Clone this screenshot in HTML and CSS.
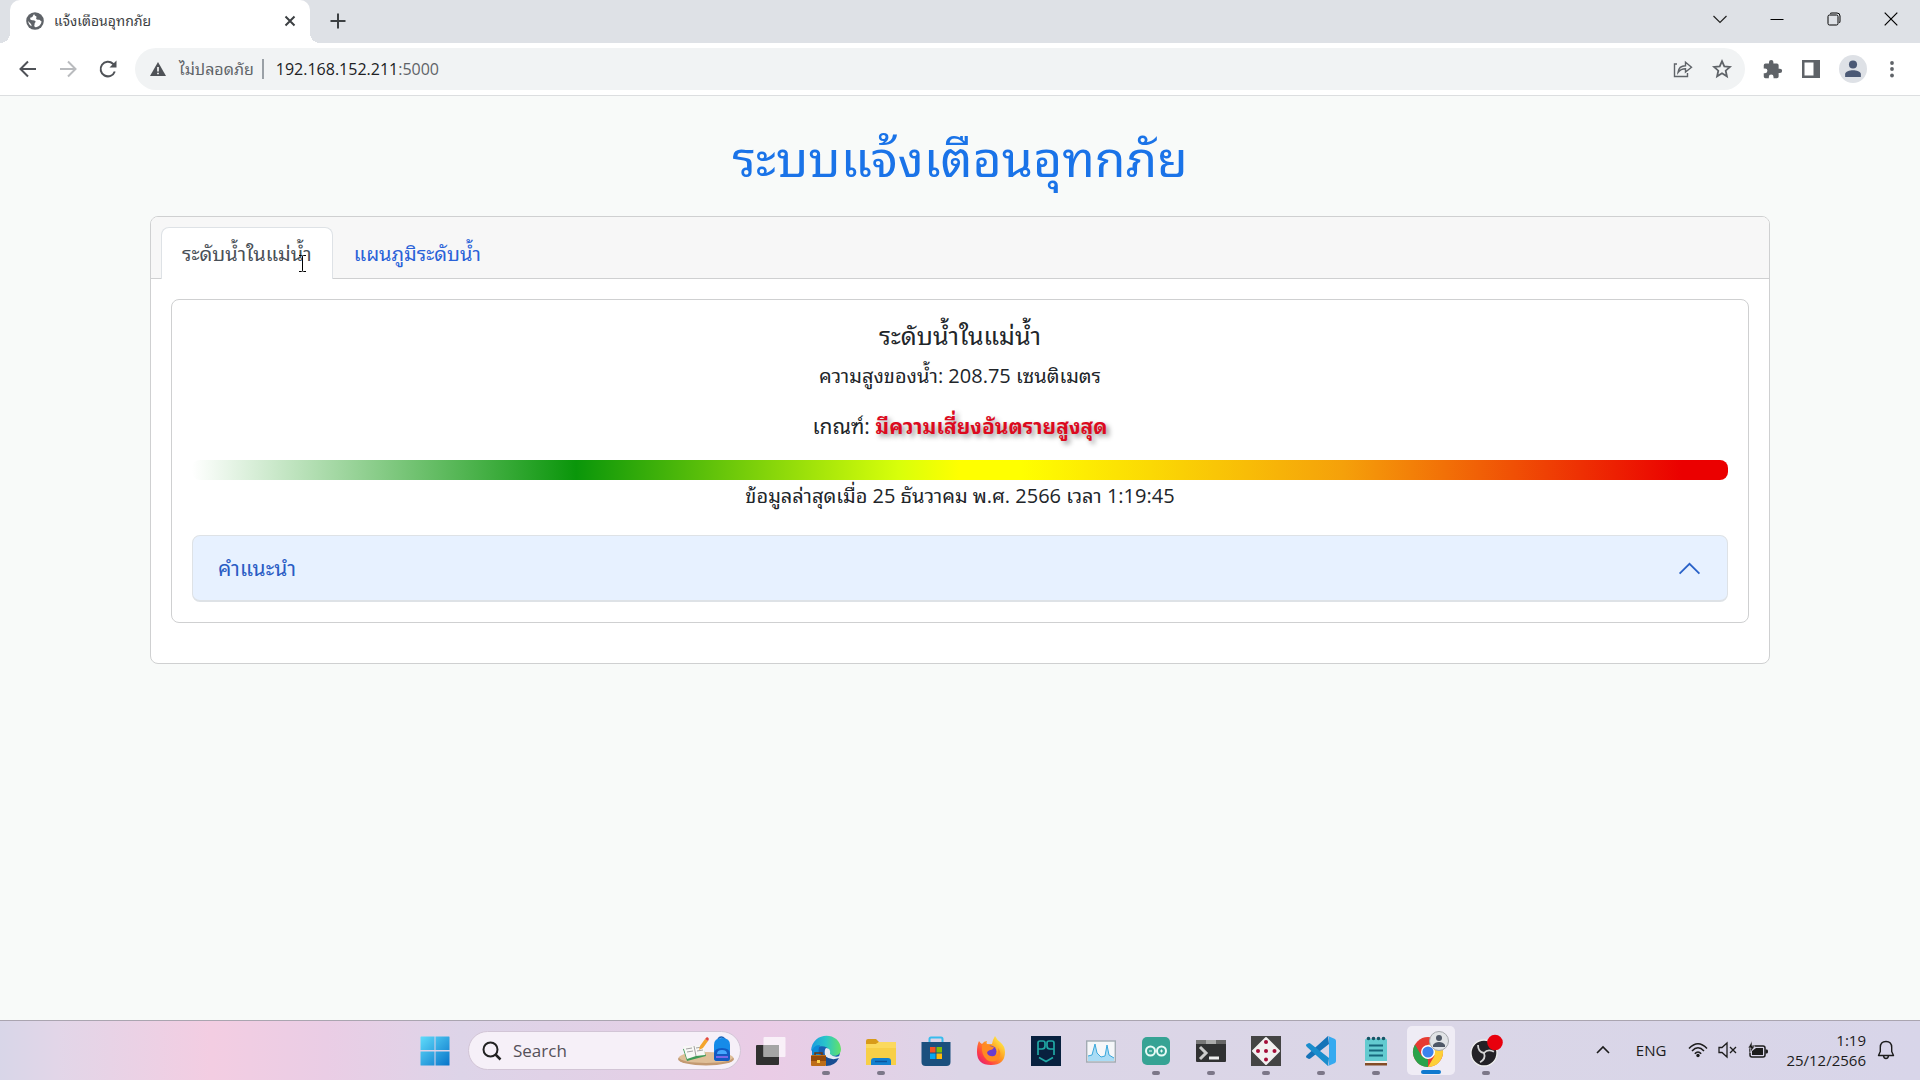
FILE: index.html
```html
<!DOCTYPE html>
<html lang="th">
<head>
<meta charset="utf-8">
<meta name="viewport" content="width=device-width, initial-scale=1">
<title>แจ้งเตือนอุทกภัย</title>
<link rel="stylesheet" href="styles.css">
</head>
<body>
<div class="screen">
  <header class="browser">
    <div class="tabstrip">
      <div class="browser-tab">
        <svg class="globe" viewBox="0 0 18 18" width="18" height="18"><circle cx="9" cy="9" r="8.8" fill="#5f6368"/><path d="M8 2.200c-1 .9-.8 1.800-1.600 2.600-.8.800-1.800.4-2.200 1.400C3.900 7.400 5 8 6.200 8.200c1.200.2 2.800-.1 3.300 1 .5 1.200-1 1.300-.9 2.500.1.900-.6 1.700-.2 2.600.2.600.8.900 1.400.9 3.200-.4 5.600-3 5.700-6-1.100-.1-1.300-1-2.300-1.400-1-.3-1.900.2-2.700-.5-.9-.8.300-1.700-.1-2.800-.3-.7-1.300-.5-1.600-1.100-.2-.4-.2-.8-.8-1.200zM2.200 8.700c0 2.200 1.300 4.500 3.300 5.500.2-.9-.2-1.700-.7-2.400-.6-.8-1.900-1.800-2.600-3.100z" fill="#fff"/></svg>
        <span class="browser-tab-title">แจ้งเตือนอุทกภัย</span>
        <button class="plain" aria-label="Close tab"><svg viewBox="0 0 12 12" width="12" height="12"><path d="M1.500 1.500l9 9M10.500 1.500l-9 9" stroke="#3c4043" stroke-width="2"/></svg></button>
      </div>
      <button class="plain new-tab" aria-label="New tab"><svg viewBox="0 0 16 16" width="16" height="16"><path d="M8 .5v15M.5 8h15" stroke="#3c4043" stroke-width="2"/></svg></button>
      <div class="window-controls">
        <button class="plain" aria-label="Search tabs"><svg viewBox="0 0 14 14" width="14" height="14"><path d="M.5 4L7 10.500 13.500 4" fill="none" stroke="#222" stroke-width="1.200"/></svg></button>
        <button class="plain" aria-label="Minimize"><svg viewBox="0 0 14 14" width="14" height="14"><path d="M.5 7.500h13" stroke="#000"/></svg></button>
        <button class="plain" aria-label="Restore"><svg viewBox="0 0 14 14" width="14" height="14"><g fill="none" stroke="#000"><rect x="1" y="3" width="10" height="10" rx="1.500"/><path d="M3 1.800Q3.500 1 5 1h5q3 0 3 3v5q0 1.500-.8 2"/></g></svg></button>
        <button class="plain" aria-label="Close window"><svg viewBox="0 0 14 14" width="14" height="14"><path d="M.7.7l12.600 12.600M13.300.7L.7 13.300" stroke="#000" stroke-width="1.200"/></svg></button>
      </div>
    </div>
    <nav class="toolbar">
      <div class="nav-buttons">
        <button class="plain" aria-label="Back"><svg viewBox="0 0 20 20" width="20" height="20"><path d="M18 10H3M10 2.500L2.500 10l7.500 7.500" fill="none" stroke="#4f5257" stroke-width="2"/></svg></button>
        <button class="plain" aria-label="Forward"><svg viewBox="0 0 20 20" width="20" height="20"><path d="M2 10h15M10 2.500l7.500 7.500-7.500 7.500" fill="none" stroke="#b9bbbe" stroke-width="2"/></svg></button>
        <button class="plain" aria-label="Reload"><svg viewBox="0 0 20 20" width="20" height="20"><path d="M16.800 12.500A7.300 7.300 0 1 1 15 4.800L17 7" fill="none" stroke="#4f5257" stroke-width="2"/><path d="M18.500 1.500v7h-7z" fill="#4f5257"/></svg></button>
      </div>
      <div class="address">
        <svg viewBox="0 0 16 14" width="16" height="14"><path d="M8 0l8 14H0z" fill="#4f5257"/><path d="M7.200 5h1.600v4.500H7.200zM7.200 10.700h1.600v1.500H7.200z" fill="#fff"/></svg>
        <span class="insecure">ไม่ปลอดภัย</span>
        <span class="address-rule"></span>
        <span class="url">192.168.152.211<span class="port">:5000</span></span>
        <button class="plain share" aria-label="Share"><svg viewBox="0 0 20 20" width="20" height="20"><g fill="none" stroke="#5f6368" stroke-width="1.400"><path d="M4 5H1.500v12.500h13V14"/><path d="M5 13.500c.5-4.500 3-6.800 7.500-6.800V3.200l6 5-6 4.800V9.800c-3.500 0-5.500 1-7.500 3.700z"/></g></svg></button>
        <button class="plain" aria-label="Bookmark"><svg viewBox="0 0 20 20" width="20" height="20"><path d="M10 2.200l2.300 5.200 5.600.5-4.200 3.800 1.200 5.600L10 14.300l-4.900 3 1.200-5.600L2.100 7.900l5.600-.5z" fill="none" stroke="#5f6368" stroke-width="1.800"/></svg></button>
      </div>
      <div class="tools">
        <button class="plain" aria-label="Extensions"><svg viewBox="0 0 24 24" width="21" height="21"><path d="M20.500 11H19V7a2 2 0 0 0-2-2h-4V3.500a2.500 2.500 0 0 0-5 0V5H4a2 2 0 0 0-2 2v3.800h1.500a2.700 2.700 0 0 1 0 5.400H2V20a2 2 0 0 0 2 2h3.800v-1.500a2.700 2.700 0 0 1 5.400 0V22H17a2 2 0 0 0 2-2v-4h1.500a2.500 2.500 0 0 0 0-5z" fill="#5f6368"/></svg></button>
        <button class="plain" aria-label="Side panel"><svg viewBox="0 0 18 18" width="18" height="18"><path d="M0 0h18v18H0zM2.500 2.500v13h9v-13z" fill="#5f6368" fill-rule="evenodd"/></svg></button>
        <button class="plain avatar" aria-label="Profile"><svg viewBox="0 0 16 16" width="18" height="18"><circle cx="8" cy="4" r="3.600" fill="#4b5975"/><path d="M1 15v-2.500C1 10 5 9 8 9s7 1 7 3.500V15z" fill="#4b5975"/></svg></button>
        <button class="plain menu" aria-label="Menu"><svg viewBox="0 0 4 18" width="4" height="18"><g fill="#5f6368"><circle cx="2" cy="3" r="1.900"/><circle cx="2" cy="9" r="1.900"/><circle cx="2" cy="15.500" r="1.900"/></g></svg></button>
      </div>
    </nav>
  </header>

  <main class="page">
    <h1 class="page-title">ระบบแจ้งเตือนอุทกภัย</h1>
    <section class="card">
      <nav class="card-header">
        <a class="nav-link active" href="#level">ระดับน้ำในแม่น้ำ<svg class="pointer" viewBox="0 0 9 17" width="9" height="17"><path d="M1 .5h2.500q1 0 1 1 0-1 1-1H8M4.500 1.500v14M1 16.500h2.500q1 0 1-1 0 1 1 1H8" fill="none" stroke="#000"/></svg></a>
        <a class="nav-link" href="#chart">แผนภูมิระดับน้ำ</a>
      </nav>
      <div class="card-body">
        <article class="card level" id="level">
          <h2 class="level-title">ระดับน้ำในแม่น้ำ</h2>
          <p class="level-line">ความสูงของน้ำ: 208.75 เซนติเมตร</p>
          <p class="level-line rating">เกณฑ์: <strong class="danger">มีความเสี่ยงอันตรายสูงสุด</strong></p>
          <div class="scale"></div>
          <p class="updated">ข้อมูลล่าสุดเมื่อ 25 ธันวาคม พ.ศ. 2566 เวลา 1:19:45</p>
          <button class="accordion" aria-expanded="true">คำแนะนำ<svg viewBox="0 0 24 24" width="25" height="25"><path d="M2.500 17L12 7.500l9.500 9.500" fill="none" stroke="#2a62c8" stroke-width="1.700"/></svg></button>
        </article>
      </div>
    </section>
  </main>

  <footer class="taskbar">
    <div class="apps">
      <button class="plain app" aria-label="Start"><svg viewBox="0 0 30 30" width="30" height="30"><defs><linearGradient id="win" x1="0" y1="0" x2="1" y2="1" gradientUnits="objectBoundingBox"><stop offset="0" stop-color="#5fdcfb"/><stop offset="1" stop-color="#0874c9"/></linearGradient></defs><path d="M1 .5h13.500V14H.5V1zM15.500.5H29q.5 0 .5.500v13h-14zM.5 15.500h14v14H1q-.5 0-.5-.5zM15.500 15.500h14V29q0 .5-.5.500H15.500z" fill="url(#win)"/></svg></button>
      <label class="search">
        <svg viewBox="0 0 20 20" width="20" height="20"><circle cx="8.500" cy="8.500" r="7" fill="none" stroke="#222" stroke-width="2"/><path d="M13.500 13.500l5 5" stroke="#222" stroke-width="2.500"/></svg>
        <input class="search-input" type="text" placeholder="Search" aria-label="Search">
        <svg viewBox="0 0 57 32" width="57" height="32"><ellipse cx="28" cy="24" rx="28" ry="6.500" fill="#c39a72"/><ellipse cx="28" cy="22.500" rx="27" ry="5.500" fill="#dfbf98"/><path d="M5 14l4 12 19-5-4-11z" fill="#3f9a57"/><path d="M5 11l11 0 10-2 1 11-9 1-9 3z" fill="#f8f8f6"/><path d="M16 11l2 10M8 14l6-1M9 17l6-1M18 13l6-1M19 16l6-1" stroke="#8c8c8c" stroke-width=".8"/><path d="M21 15l1-4 5-7 3 2-5 7z" fill="#f4a52c"/><path d="M27 4l2-2q3 1 1 4z" fill="#e2473f"/><path d="M40 4q3-4 7 0" fill="none" stroke="#1761b8" stroke-width="1.500"/><path d="M36 10q0-7 8-7t8 7v13q0 3-3 3H39q-3 0-3-3z" fill="#168be8"/><path d="M36 19q0-6 8-6t8 6v4q0 3-3 3H39q-3 0-3-3z" fill="#125ac3"/><path d="M39 19q0-4 5-4t5 4z" fill="#45a7ff"/><path d="M38 21h12v2H38z" fill="#7968e8"/></svg>
      </label>
      <button class="plain app" aria-label="Task view"><svg viewBox="0 0 30 30" width="30" height="30"><rect y="9" width="23" height="20" rx="1" fill="#303030"/><rect x="7.500" y="1" width="22" height="20" rx="1" fill="#fff" opacity=".7"/><path d="M7.500 9H23v12H7.500z" fill="#a5a5a5"/></svg></button>
      <button class="plain app running" aria-label="Edge"><svg viewBox="0 0 30 30" width="30" height="30"><defs><linearGradient id="edge" x1="0" x2="1"><stop offset="0" stop-color="#1b9be0"/><stop offset=".5" stop-color="#2ac6c9"/><stop offset="1" stop-color="#63e267"/></linearGradient></defs><circle cx="15" cy="15" r="14" fill="#1a60b2"/><path d="M0 15C1-5 29-5 30 13c0 6-5 8-11 6-2-1 0-2-1-5-2-5-12-5-18 1z" fill="url(#edge)"/><path d="M1 18Q1 9 9 9c-3 6-1 10 4 15H2z" fill="#0c8cd8"/><path d="M15 12q5 0 4 6 4 4 10 2-1 3-3 5-10 0-12-6-1-5 1-7z" fill="#e7eaf4"/><path d="M14 20q6 5 14 2-4 8-13 8z" fill="#174d92"/><rect y="19" width="15" height="11" rx="1" fill="#bd6d18"/><path d="M4 19v-2h7v2" fill="none" stroke="#6c350e" stroke-width="1.500"/><path d="M0 20h15v5H0z" fill="#91490c"/><path d="M6 24h3v3H6z" fill="#ffd34d"/></svg></button>
      <button class="plain app running" aria-label="File Explorer"><svg viewBox="0 0 30 30" width="30" height="30"><path d="M0 5q0-2 2-2h8l3 3v5H0z" fill="#d89b19"/><path d="M0 8h10l3-2h17v23H0z" fill="#f7cf47"/><path d="M0 8h10l3-2h17v6H0z" fill="#fbd95d"/><path d="M5 29v-4q0-3 3-3h14q3 0 3 3v4z" fill="#1380cf"/><path d="M9 25.500h12" stroke="#0b559d" stroke-width="1.500"/></svg></button>
      <button class="plain app" aria-label="Microsoft Store"><svg viewBox="0 0 30 30" width="30" height="30"><path d="M8.500 7V3q0-1.500 1.500-1.500h10q1.500 0 1.500 1.500v4" fill="none" stroke="#38bced" stroke-width="2"/><path d="M.5 6h29v20q0 4-4 4h-21q-4 0-4-4z" fill="#1b507e"/><path d="M9 11h5.500v5.500H9z" fill="#f35325"/><path d="M15.500 11H21v5.500h-5.500z" fill="#81bc06"/><path d="M9 17.500h5.500V23H9z" fill="#05a6f0"/><path d="M15.500 17.500H21V23h-5.500z" fill="#ffba08"/></svg></button>
      <button class="plain app" aria-label="Firefox"><svg viewBox="0 0 30 30" width="30" height="30"><defs><linearGradient id="fox" x1="1" y1="0" x2="0" y2="1"><stop offset=".1" stop-color="#fff34a"/><stop offset=".45" stop-color="#ff9a21"/><stop offset=".75" stop-color="#ff3d45"/><stop offset="1" stop-color="#d4128c"/></linearGradient></defs><path d="M3 5q1 2 3 3 2-3 5-3-1 2 0 3l5 0q1-5 3-8 2 4 5 6 5 4 5 10 0 13-14 13T1 16Q1 9 3 5z" fill="url(#fox)"/><circle cx="14.500" cy="15.500" r="6" fill="#6a3bd0"/><path d="M6 9q6-2 8 1l4 1q-1 3-4 3-3 1-3 3 2 4 7 3 5-1 4-8 4 5 1 10-5 6-12 2-6-5-5-15z" fill="#ff8a22"/></svg></button>
      <button class="plain app" aria-label="Game launcher"><svg viewBox="0 0 30 30" width="30" height="30"><path d="M0 0h30v30H0z" fill="#08213f"/><path d="M7 19V7q0-2 2-2h3q2 0 2 2v3q0 3-3 3H7M23 19V7q0-2-2-2h-3q-2 0-2 2v3q0 3 3 3h4M8 21.500l7 4 7-4" fill="none" stroke="#20a8a5" stroke-width="1.700"/></svg></button>
      <button class="plain app" aria-label="Monitor"><svg viewBox="0 0 30 30" width="30" height="30"><rect x=".7" y="5" width="28.600" height="21" fill="#f5f7f9" stroke="#a2abb3" stroke-width="1.400"/><path d="M2 20l4-1 3-11 2 9 4 4 4-1 2-11 2 10 5 3v3H2z" fill="#aadcf5"/><path d="M2 20l4-1 3-11 2 9 4 4 4-1 2-11 2 10 5 3" fill="none" stroke="#3ba8dc"/></svg></button>
      <button class="plain app running" aria-label="Arduino"><svg viewBox="0 0 30 30" width="30" height="30"><rect x="1" y="1" width="28" height="28" rx="5" fill="#36a394"/><g fill="none" stroke="#e8fbf6" stroke-width="2"><circle cx="9.500" cy="15" r="4.500"/><circle cx="20.500" cy="15" r="4.500"/><path d="M8 15h3M19 15h3M20.500 13.500v3" stroke-width="1"/></g></svg></button>
      <button class="plain app running" aria-label="Terminal"><svg viewBox="0 0 30 30" width="30" height="30"><rect y="4" width="30" height="22" rx="1" fill="#303132"/><path d="M0 4h10v4H0z" fill="#777"/><path d="M10 4h10v4H10z" fill="#aaa"/><path d="M20 4h10v4H20z" fill="#666"/><path d="M4 11l6 6-6 6" fill="none" stroke="#ccc" stroke-width="3"/><path d="M13 22h10" stroke="#eee" stroke-width="3"/></svg></button>
      <button class="plain app running" aria-label="Dice"><svg viewBox="0 0 30 30" width="30" height="30"><path d="M0 0h30v30H0z" fill="#444"/><path d="M15 2l13 13-13 13L2 15z" fill="#f2f0f0" stroke="#f2f0f0" stroke-width="2" stroke-linejoin="round"/><g fill="#a50d38"><circle cx="15" cy="6" r="2"/><circle cx="7" cy="15" r="2"/><circle cx="15" cy="15" r="2"/><circle cx="23.500" cy="15" r="2"/><circle cx="15" cy="23.500" r="2"/></g></svg></button>
      <button class="plain app running" aria-label="VS Code"><svg viewBox="0 0 30 30" width="30" height="30"><path d="M22 0L1 19q-2 2 0 3l2 1q1 0 2-1L23 8z" fill="#1673b8"/><path d="M22 30L1 11q-2-2 0-3l2-1q1 0 2 1l18 14z" fill="#1a8dcd"/><path d="M22 0l7 3q1 1 1 2v20q0 1-1 2l-7 3q1-1 1-3V3q0-2-1-3z" fill="#36aaf0"/></svg></button>
      <button class="plain app running" aria-label="Notepad"><svg viewBox="0 0 30 30" width="30" height="30"><rect x="4" y="3" width="22" height="26" rx="1" fill="#63cbd0"/><path d="M4 27h22v2.500H4z" fill="#834c26"/><path d="M4 25h22v2H4z" fill="#f1efea"/><g fill="#155566"><circle cx="7.500" cy="2.500" r="1.800"/><circle cx="12.500" cy="2.500" r="1.800"/><circle cx="17.500" cy="2.500" r="1.800"/><circle cx="22.500" cy="2.500" r="1.800"/></g><path d="M8 9.500h14M8 14.500h14M8 19.500h14" stroke="#17677c" stroke-width="2"/></svg></button>
      <button class="plain app running current" aria-label="Chrome"><svg viewBox="0 0 36 32" width="36" height="32"><circle cx="15" cy="17" r="15" fill="#e63b32"/><path d="M2 9.500l6.500 11.200L15 24.500 15 32A15 15 0 0 1 2 9.500z" fill="#29a34b"/><path d="M28 9.500A15 15 0 0 1 15 32l6.500-11.300L15 9.500z" fill="#fdcf37"/><circle cx="15" cy="17" r="7" fill="#fff"/><circle cx="15" cy="17" r="5.600" fill="#3b82ed"/><circle cx="26" cy="6" r="9.500" fill="#e1e3e6" stroke="#a5a8ad"/><circle cx="26" cy="3" r="3" fill="#4e5766"/><path d="M20 12V10q2-3 6-3t6 3v2z" fill="#4e5766"/></svg></button>
      <button class="plain app running" aria-label="OBS Studio"><svg viewBox="0 0 36 32" width="36" height="32"><circle cx="16" cy="18" r="13" fill="#232226" stroke="#eee" stroke-width="1.300"/><g fill="none" stroke="#d5d5d5" stroke-width="1.800"><path d="M16 18q-6-1-6-8"/><path d="M16 18q-6-1-6-8" transform="rotate(120 16 18)"/><path d="M16 18q-6-1-6-8" transform="rotate(240 16 18)"/></g><circle cx="27" cy="7.500" r="7.800" fill="#e8000d"/></svg></button>
    </div>
    <div class="tray">
      <button class="plain" aria-label="Hidden icons"><svg viewBox="0 0 14 8" width="14" height="8"><path d="M1 7l6-6 6 6" fill="none" stroke="#1c1c1c" stroke-width="1.600"/></svg></button>
      <span class="lang">ENG</span>
      <div class="status">
        <svg viewBox="0 0 20 16" width="20" height="16"><g fill="none" stroke="#1c1c1c" stroke-width="1.500"><path d="M1 6.500q9-9.500 18 0M4 9q6-6.500 12 0M6.800 11.800q3.200-3.600 6.400 0"/></g><circle cx="10" cy="13.500" r="1.700" fill="#1c1c1c"/></svg>
        <svg viewBox="0 0 20 16" width="20" height="16"><path d="M1 5.500h3L9 1v14l-5-4.500H1zM12 5l6 6M18 5l-6 6" fill="none" stroke="#1c1c1c" stroke-width="1.300"/></svg>
        <svg viewBox="0 0 20 16" width="20" height="16"><rect x="2" y="4" width="15" height="11" rx="2" fill="none" stroke="#1c1c1c" stroke-width="1.500"/><path d="M4 9l4-3h7v7H4zM17.500 7.500H19q1 0 1 2t-1 2h-1.500z" fill="#1c1c1c"/><path d="M4-1L0 6h3L2 11l5-7H4z" fill="#1c1c1c" stroke="#dad7e8" stroke-width=".6"/></svg>
      </div>
      <div class="clock"><span>1:19</span><span>25/12/2566</span></div>
      <button class="plain" aria-label="Notifications"><svg viewBox="0 0 18 20" width="18" height="20"><path d="M1.500 15.500l1.800-4V7.500q0-6 5.700-6t5.700 6v4l1.800 4zM6.500 16q.5 2.500 2.500 2.500t2.500-2.500" fill="none" stroke="#1c1c1c" stroke-width="1.400" stroke-linejoin="round"/></svg></button>
    </div>
  </footer>
</div>
</body>
</html>
```
FILE: styles.css
```css
*, *::before, *::after { box-sizing: border-box; }

body {
  margin: 0;
  font-family: "Open Sans", "Noto Sans", "Noto Sans Thai Looped", "Noto Looped Thai", "Loma", "Noto Sans Thai", sans-serif;
  font-size: 20px;
  line-height: 30px;
  color: #212529;
}

h1, h2, p { margin: 0; font-weight: 400; }
svg { display: block; flex: none; overflow: visible; }

.screen { display: flex; flex-direction: column; min-height: 100vh; }

.plain {
  display: flex;
  align-items: center;
  justify-content: center;
  flex: none;
  padding: 0;
  border: 0;
  background: none;
}

/* browser window */
.tabstrip { display: flex; height: 43px; background: #dee1e6; }

.browser-tab {
  display: flex;
  align-items: center;
  width: 300px;
  margin-left: 10px;
  padding: 0 14px 2px 16px;
  gap: 10px;
  position: relative;
  border-radius: 10px 10px 0 0;
  background: #fff;
  font-size: 14px;
  color: #3c4043;
}
.browser-tab::before,
.browser-tab::after {
  content: "";
  position: absolute;
  bottom: 0;
  width: 10px;
  height: 10px;
}
.browser-tab::before { right: 100%; background: radial-gradient(circle at 0 0, #dee1e6 10px, #fff 10px); }
.browser-tab::after { left: 100%; background: radial-gradient(circle at 100% 0, #dee1e6 10px, #fff 10px); }
.browser-tab-title { flex: 1; white-space: nowrap; }
.new-tab { width: 55px; padding-bottom: 1px; }

.window-controls { display: flex; margin-left: auto; height: 37px; padding-right: 1px; }
.window-controls .plain { width: 57px; }

.toolbar {
  display: flex;
  align-items: center;
  height: 53px;
  padding: 0 22px 0 18px;
  border-bottom: 1px solid #dcdee0;
  background: #fff;
}
.nav-buttons { display: flex; gap: 20px; width: 117px; }

.address {
  display: flex;
  align-items: center;
  flex: 1;
  height: 42px;
  padding: 0 13px 0 15px;
  border-radius: 21px;
  background: #f1f3f4;
  font-size: 16px;
  color: #202124;
}
.insecure { margin-left: 13px; color: #5f6368; }
.address-rule { width: 2px; height: 20px; margin: 0 12px 0 8px; background: #9aa0a6; }
.port { color: #5f6368; }
.share { margin: 0 19px 0 auto; }

.tools { display: flex; align-items: center; gap: 19px; margin-left: 17px; }
.avatar { width: 28px; height: 28px; border-radius: 50%; background: #dee1e6; }
.menu { width: 12px; }

/* page */
.page {
  flex: 1;
  padding: 30px 150px;
  background: #f8faf9;
}
.page-title {
  margin-bottom: 26px;
  font-size: 50px;
  line-height: 64px;
  text-align: center;
  color: #1a73e8;
}
.card {
  border: 1px solid #cfd0d1;
  border-radius: 8px;
  background: #fff;
}
.card-header {
  display: flex;
  padding: 10px 10px 0;
  border-bottom: 1px solid #cfd0d1;
  border-radius: 7px 7px 0 0;
  background: #f7f7f7;
}
.nav-link {
  position: relative;
  margin-bottom: -1px;
  padding: 11px 20px 10px;
  border: 1px solid transparent;
  border-bottom: 0;
  border-radius: 8px 8px 0 0;
  text-decoration: none;
  color: #2a62d8;
}
.nav-link.active { border-color: #dee2e6; background: #fff; color: #495057; }
.pointer { position: absolute; right: 25px; bottom: 7px; }

.card-body { padding: 20px 20px 40px; }
.level { padding: 20px; text-align: center; }
.level-title { margin-bottom: 10px; font-size: 25px; }
.level-line { margin-bottom: 18px; line-height: 32px; }
.rating { font-size: 21px; }
.danger { font-weight: 700; color: #dc0a1e; text-shadow: 3px 3px 5px #999; }
.scale {
  height: 20px;
  border-radius: 8px;
  background: linear-gradient(90deg, #fff, #0a960a 25%, #d8ff0a 46%, #ff0 50%, #ff0 54%, #f5a00a 75%, #eb0000 97%);
}
.updated { margin-bottom: 23px; line-height: 32px; }
.accordion {
  display: flex;
  align-items: center;
  justify-content: space-between;
  width: 100%;
  height: 67px;
  padding: 0 25px;
  border: 1px solid #dee2e6;
  border-bottom-width: 2px;
  border-radius: 8px;
  background: #e7f1ff;
  font: inherit;
  font-size: 21px;
  color: #2a5cc4;
}

/* taskbar */
.taskbar {
  display: grid;
  grid-template-columns: 1fr auto 1fr;
  align-items: center;
  height: 60px;
  padding-bottom: 2px;
  border-top: 1px solid #aaa5b0;
  background: linear-gradient(90deg, #d8d6e8, #e2d6e8 3%, #f3cde2 11%, #eacde5 17%, #ddd4e8 24%, #e3d0e6 33%, #eacce6 40%, #dcd5e7 50%, #dad6e7 75%, #d8d5e9);
}
.apps { grid-column: 2; display: flex; align-items: center; }
.app { position: relative; width: 55px; height: 57px; }
.app.running::after {
  content: "";
  position: absolute;
  bottom: 4px;
  width: 8px;
  height: 4px;
  border-radius: 2px;
  background: #7c7788;
}
.app.current { margin: 5px 3px 5px 4px; width: 48px; height: 49px; border-radius: 5px; background: #efecf5; }
.app.current::after { bottom: 1px; width: 20px; background: #0f79cf; }

.search {
  display: flex;
  align-items: center;
  width: 273px;
  height: 39px;
  margin: 0 2px 0 6px;
  padding: 0 5px 0 13px;
  border: 1px solid #d2c5d6;
  border-radius: 20px;
  background: #f6f0f8;
}
.search-input {
  flex: 1;
  min-width: 0;
  padding: 0 0 0 11px;
  border: 0;
  outline: 0;
  background: none;
  font: inherit;
  font-size: 17px;
}
.search-input::placeholder { color: #555059; opacity: 1; }

.tray {
  display: flex;
  align-items: center;
  justify-content: flex-end;
  padding: 0 25px 2px 0;
  font-size: 15px;
  line-height: 20px;
  color: #1c1c1c;
}
.lang { margin: 0 22px 0 26px; }
.status { display: flex; gap: 10px; }
.clock { display: flex; flex-direction: column; align-items: flex-end; margin: 0 11px 0 18px; }
```
